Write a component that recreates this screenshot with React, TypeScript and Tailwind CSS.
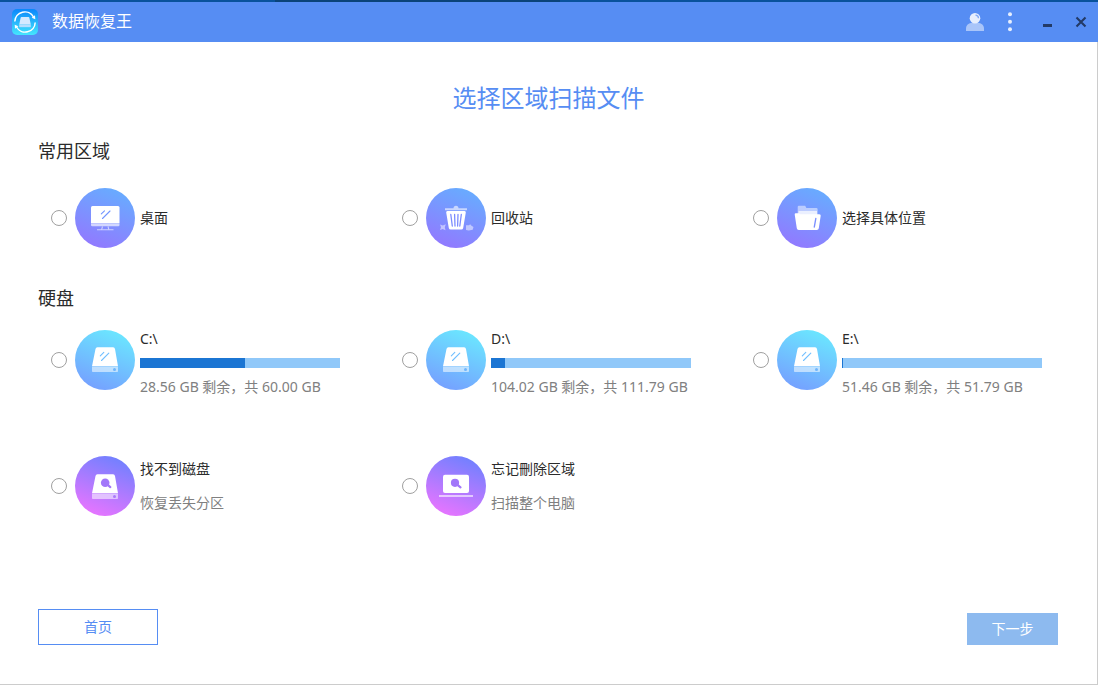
import type { ReactNode } from "react";

type GradientProps = { id: string; from: string; to: string; children: ReactNode };

function Badge({ id, from, to, children }: GradientProps) {
  return (
    <svg viewBox="0 0 60 60" className="size-[60px] shrink-0" aria-hidden="true">
      <defs>
        <linearGradient id={id} x1="0.7" y1="0" x2="0.3" y2="1">
          <stop offset="0.05" stopColor={from} />
          <stop offset="0.95" stopColor={to} />
        </linearGradient>
      </defs>
      <circle cx="30" cy="30" r="30" fill={`url(#${id})`} />
      {children}
    </svg>
  );
}

function DesktopIcon() {
  return (
    <Badge id="desktop" from="#69aaff" to="#907bff">
      <path d="M17.5 18h25.500a1.500 1.500 0 0 1 1.500 1.500V35H16V19.500A1.500 1.500 0 0 1 17.500 18Z" fill="#fff" />
      <path d="M16 35.300h28.500V37a1.200 1.200 0 0 1-1.200 1.200H17.200A1.200 1.200 0 0 1 16 37Z" fill="#fff" opacity="0.65" />
      <path d="M27.500 38.500l-.800 2.800M33 38.500l.800 2.800M22 41.700h16.500" stroke="#fff" strokeWidth="1.100" opacity="0.6" fill="none" />
      <path d="M26.300 25.800l3.200-3M27.500 30.500l7.500-7.500" stroke="#7295ff" strokeWidth="1.100" strokeLinecap="round" />
    </Badge>
  );
}

function TrashIcon() {
  return (
    <Badge id="trash" from="#69aaff" to="#907bff">
      <path d="M19 20.200h8.500a2.500 2.500 0 0 1 5 0H41v2H19Z" fill="#fff" opacity="0.6" />
      <path d="M21.500 23h17a1.300 1.300 0 0 1 1.300 1.500l-2.600 15.500a2 2 0 0 1-2 1.600H24.800a2 2 0 0 1-2-1.600L20.200 24.500A1.300 1.300 0 0 1 21.500 23Z" fill="#fff" />
      <path d="M24.800 26.500l1.500 11.500M28.600 26.500l.400 11.500M32 26.500l-.400 11.500M35.300 26.500L33.800 38" stroke="#7c8cff" strokeWidth="1.300" strokeLinecap="round" />
      <path d="M14 36.500l2.800 1 3-1.200-1 3 .700 3-2.800-1.300-2.700 1 1-2.800Z" fill="#fff" opacity="0.5" />
      <path d="M40 37.200h3l1.200-1 1 1.300 2.300 1.500-.800 2.700-4 .900-2.700-.700Z" fill="#fff" opacity="0.5" />
    </Badge>
  );
}

function FolderIcon() {
  return (
    <Badge id="folder" from="#69aaff" to="#907bff">
      <path d="M20.700 27v-8a1.200 1.200 0 0 1 1.200-1.200h6.300l1.200 2.200h10a1.200 1.200 0 0 1 1.200 1.200V27Z" fill="#fff" opacity="0.5" />
      <path d="M21.500 23h18.500v4H21.500Z" fill="#fff" opacity="0.7" />
      <path d="M19 25.300h3l1 .900h19.300a1.400 1.400 0 0 1 1.400 1.600l-1.900 12.500a2 2 0 0 1-2 1.700H21.800a2 2 0 0 1-2-1.700L17.700 26.600A1.200 1.200 0 0 1 19 25.300Z" fill="#fff" />
      <path d="M38.800 30.500L37.300 39" stroke="#7b8fff" strokeWidth="1.400" strokeLinecap="round" />
    </Badge>
  );
}

function DriveBody() {
  return (
    <>
      <path d="M22.500 17.300h15.500a2 2 0 0 1 2 1.600L43 36.300H17L20.500 18.900a2 2 0 0 1 2-1.600Z" fill="#fff" />
      <path d="M17 36.700h26v4.600a.800.800 0 0 1-.8.800H17.800a.8.8 0 0 1-.8-.8Z" fill="#fff" opacity="0.55" />
    </>
  );
}

function DriveIcon({ id }: { id: string }) {
  return (
    <Badge id={id} from="#6be4ff" to="#75a3ff">
      <DriveBody />
      <circle cx="39.500" cy="39.500" r="1.500" fill="#6fb5fc" />
      <path d="M25.300 25.800l3.500-3.500M26.500 30.500l7.300-7.300" stroke="#70bfff" strokeWidth="1.100" strokeLinecap="round" />
    </Badge>
  );
}

function LostDriveIcon() {
  return (
    <Badge id="lost" from="#7580ff" to="#e375ff">
      <g transform="translate(0 1)">
        <DriveBody />
        <circle cx="39.500" cy="39.500" r="1.500" fill="#a979fb" />
      </g>
      <circle cx="30.200" cy="26.800" r="4.300" fill="#a277fa" />
      <path d="M33 29.200l2.300 1.900" stroke="#a277fa" strokeWidth="2.200" strokeLinecap="round" />
    </Badge>
  );
}

function LaptopIcon() {
  return (
    <Badge id="laptop" from="#7580ff" to="#e375ff">
      <rect x="17" y="18.800" width="26" height="18.200" rx="2" fill="#fff" />
      <path d="M13 39h34v2H13Z" fill="#fff" opacity="0.6" />
      <circle cx="29" cy="26.800" r="4.100" fill="#a277fa" />
      <path d="M31.800 29.200l2.700 2.200" stroke="#a277fa" strokeWidth="2.200" strokeLinecap="round" />
    </Badge>
  );
}

function AppLogo() {
  return (
    <svg viewBox="0 0 26 26" className="size-[26px]" aria-hidden="true">
      <defs>
        <linearGradient id="logo" x1="0" y1="0" x2="0" y2="1">
          <stop offset="0" stopColor="#0a86fb" />
          <stop offset="1" stopColor="#45e6fd" />
        </linearGradient>
      </defs>
      <rect width="26" height="26" rx="5" fill="url(#logo)" />
      <path d="M2.800 12.500A10 10 0 0 1 21.500 8M23.200 13.500A10 10 0 0 1 4.500 18" fill="none" stroke="#fff" strokeWidth="1.500" />
      <path d="M23.300 10.300l-.3-4-3.300 2.500ZM2.700 15.700l.3 4 3.300-2.500Z" fill="#fff" />
      <path d="M9.500 8h7a.800.800 0 0 1 .8.600L18.800 15.500H7.200L8.700 8.600A.8.8 0 0 1 9.500 8Z" fill="#d5e9ff" />
      <path d="M7.200 15.500h11.600v2.700H7.200Z" fill="#b5defe" />
    </svg>
  );
}

function Choice({ icon, children }: { icon: ReactNode; children: ReactNode }) {
  return (
    <label className="flex cursor-pointer items-start gap-[5px]">
      <span className="flex h-[60px] shrink-0 items-center gap-2">
        <input
          type="radio"
          name="area"
          className="size-4 appearance-none rounded-full border border-[#a0a0a0] bg-white checked:border-4 checked:border-[#568df3]"
        />
        {icon}
      </span>
      <span className="flex min-h-[60px] min-w-0 flex-1 flex-col text-sm leading-[18px]">{children}</span>
    </label>
  );
}

const places = [
  { name: "桌面", icon: <DesktopIcon /> },
  { name: "回收站", icon: <TrashIcon /> },
  { name: "选择具体位置", icon: <FolderIcon /> },
];

const drives = [
  { letter: "C", free: 28.56, total: 60 },
  { letter: "D", free: 104.02, total: 111.79 },
  { letter: "E", free: 51.46, total: 51.79 },
];

const others = [
  { name: "找不到磁盘", note: "恢复丢失分区", icon: <LostDriveIcon /> },
  { name: "忘记刪除区域", note: "扫描整个电脑", icon: <LaptopIcon /> },
];

export default function App() {
  return (
    <div className="flex min-h-screen flex-col bg-white font-['Noto_Sans','Noto_Sans_CJK_SC',sans-serif] text-[#2b2b2b]">
      <div className="flex h-[2px] bg-[#08529c]">
        <span className="ml-[25%] w-[26%] bg-[#0a4379]" />
      </div>
      <header className="flex h-10 items-center bg-[#568df3] pr-[11px] pl-3">
        <AppLogo />
        <h1 className="ml-[14px] pb-[2px] text-base leading-6 text-white">数据恢复王</h1>
        <div className="ml-auto flex items-center">
          <button type="button" aria-label="账户" className="mr-[23px]">
            <svg viewBox="0 0 20 20" className="size-5" aria-hidden="true">
              <path d="M1 19v-2.500C1 12.500 4.500 10.500 10 10.500s9 2 9 6V19Z" fill="#a9c5f9" />
              <circle cx="10" cy="6.300" r="5.300" fill="#e6eefd" />
              <path d="M10.500 3.200a3.200 3.200 0 0 1 3 3" stroke="#7fa9f6" strokeWidth="1.300" fill="none" />
            </svg>
          </button>
          <button type="button" aria-label="菜单" className="mr-[30px]">
            <svg viewBox="0 0 4 20" className="h-5 w-1" aria-hidden="true">
              <circle cx="2" cy="2.300" r="2" fill="#e6eefd" />
              <circle cx="2" cy="9.800" r="2" fill="#e6eefd" />
              <circle cx="2" cy="17.300" r="2" fill="#e6eefd" />
            </svg>
          </button>
          <button type="button" aria-label="最小化" className="mr-[23px]">
            <svg viewBox="0 0 10 10" className="size-[10px]" aria-hidden="true">
              <path d="M1 7h9v3h-9Z" fill="#233a66" />
            </svg>
          </button>
          <button type="button" aria-label="关闭">
            <svg viewBox="0 0 12 12" className="size-3" aria-hidden="true">
              <path d="M1.500 1.500l9 9M10.500 1.500l-9 9" stroke="#233a66" strokeWidth="2.100" />
            </svg>
          </button>
        </div>
      </header>

      <main className="flex flex-1 flex-col border-r border-b border-[#ccc]">
        <h2 className="mt-10 text-center text-2xl leading-8 text-[#568df3]">选择区域扫描文件</h2>

        <h3 className="mt-[23px] px-[38px] text-lg leading-7">常用区域</h3>
        <div className="mt-[23px] grid grid-cols-3 gap-x-[60px] pr-[53px] pl-[51px]">
          {places.map((p) => (
            <Choice key={p.name} icon={p.icon}>
              <span className="my-auto">{p.name}</span>
            </Choice>
          ))}
        </div>

        <h3 className="mt-9 px-[38px] text-lg leading-7">硬盘</h3>
        <div className="mt-[18px] grid grid-cols-3 gap-x-[60px] gap-y-[60px] pr-[53px] pl-[51px]">
          {drives.map((d) => (
            <Choice key={d.letter} icon={<DriveIcon id={`drive-${d.letter}`} />}>
              <span>{d.letter}:\</span>
              <span className="my-[10px] block h-[10px] w-[200px] max-w-full bg-[#90c8f9]">
                <span
                  className="block h-full bg-[#1b75d3]"
                  style={{ width: `${((d.total - d.free) / d.total) * 100}%` }}
                />
              </span>
              <span className="whitespace-nowrap text-[#808080]">
                {d.free.toFixed(2)} GB 剩余，共 {d.total.toFixed(2)} GB
              </span>
            </Choice>
          ))}
          {others.map((o) => (
            <Choice key={o.name} icon={o.icon}>
              <span className="my-auto flex flex-col gap-4">
                <span>{o.name}</span>
                <span className="text-[#808080]">{o.note}</span>
              </span>
            </Choice>
          ))}
        </div>

        <footer className="mt-auto flex items-end justify-between pr-[39px] pb-[39px] pl-[38px]">
          <button type="button" className="h-9 w-[120px] border border-[#568df3] text-sm text-[#568df3]">
            首页
          </button>
          <button type="button" className="h-8 w-[91px] bg-[#8dbaef] text-sm text-white">
            下一步
          </button>
        </footer>
      </main>
    </div>
  );
}
